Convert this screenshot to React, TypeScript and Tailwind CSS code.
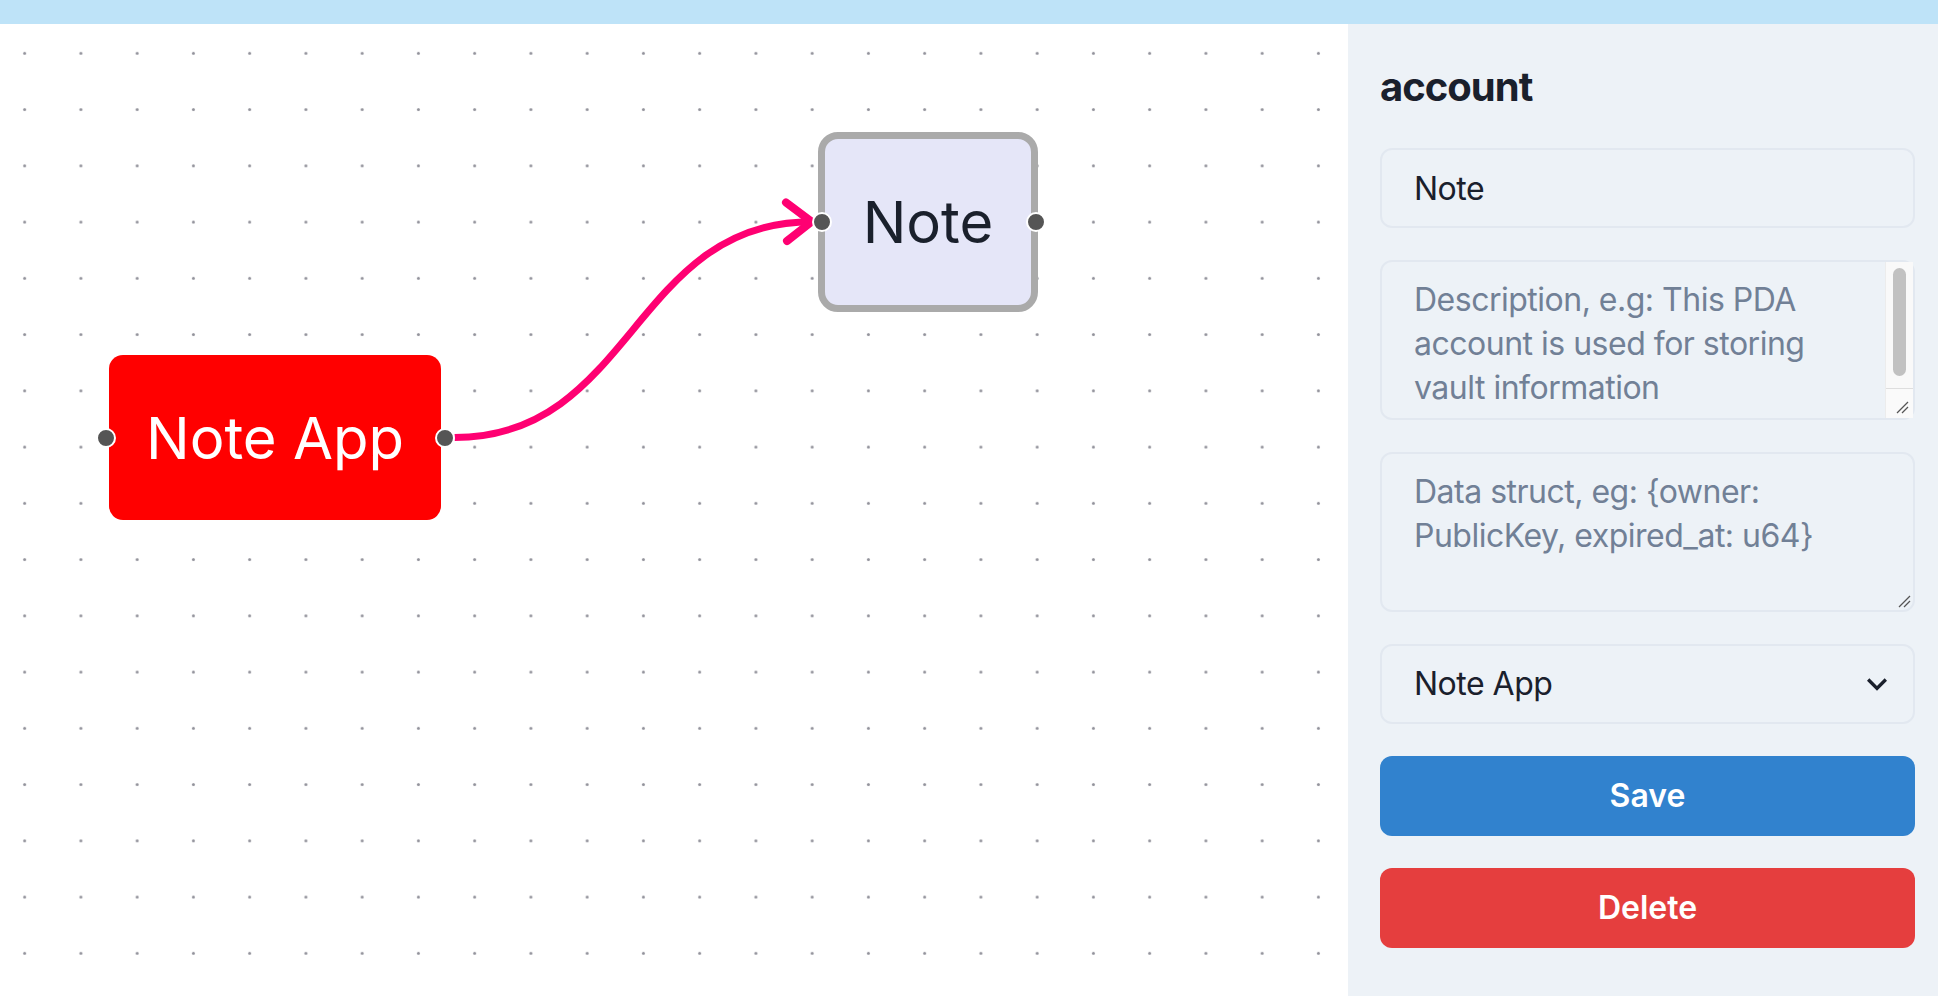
import React from "react";

// canvas handle: dark dot with a white ring
function Handle({ cx, cy }: { cx: number; cy: number }) {
  return (
    <div
      className="absolute h-[20px] w-[20px] rounded-full border-[2.5px] border-white bg-[#555555]"
      style={{ left: cx - 10, top: cy - 10 }}
    />
  );
}

function FlowCanvas() {
  return (
    <div className="relative flex-1 overflow-hidden bg-white">
      {/* dotted background + edge */}
      <svg className="absolute inset-0 h-full w-full" xmlns="http://www.w3.org/2000/svg">
        <defs>
          <pattern
            id="dots"
            x="-3.46"
            y="1.2"
            width="56.25"
            height="56.25"
            patternUnits="userSpaceOnUse"
          >
            <circle cx="28.125" cy="28.125" r="1.5" fill="#91919a" />
          </pattern>
        </defs>
        <rect width="100%" height="100%" fill="url(#dots)" />
        <path
          d="M454.5,413.5 C633,413.5 633,197.7 811.7,197.7"
          fill="none"
          stroke="#ff0072"
          strokeWidth="7"
        />
        <polyline
          points="786,178.5 811.7,197.7 787,217"
          fill="none"
          stroke="#ff0072"
          strokeWidth="8"
          strokeLinecap="round"
          strokeLinejoin="round"
        />
      </svg>

      {/* Note App node */}
      <div className="absolute left-[109px] top-[331px] flex h-[165px] w-[332px] items-center justify-center rounded-[14px] bg-[#ff0000]">
        <span className="text-[58px] leading-none text-white">Note App</span>
      </div>
      <Handle cx={105.5} cy={413.5} />
      <Handle cx={445} cy={413.5} />

      {/* Note node */}
      <div className="absolute left-[818px] top-[108px] flex h-[180px] w-[220px] items-center justify-center rounded-[20px] border-[7px] border-[#aaaaaa] bg-[#e5e6f8]">
        <span className="text-[58px] leading-none text-[#1a202c]">Note</span>
      </div>
      <Handle cx={821.7} cy={198} />
      <Handle cx={1036} cy={198} />
    </div>
  );
}

function ResizeGrip() {
  return (
    <svg
      className="pointer-events-none absolute bottom-[4px] right-[4px]"
      width="14"
      height="14"
      viewBox="0 0 14 14"
    >
      <line x1="2" y1="13" x2="13" y2="2" stroke="#555" strokeWidth="1.2" />
      <line x1="7" y1="13" x2="13" y2="7" stroke="#555" strokeWidth="1.2" />
    </svg>
  );
}

function SidePanel() {
  const field =
    "w-full rounded-[12px] border-2 border-[#e2e8f0] bg-transparent px-8 text-[32px] tracking-[-0.5px] text-[#1a202c] outline-none placeholder:text-[#718096]";

  return (
    <aside className="w-[590px] shrink-0 bg-[#edf2f7] pl-8 pr-[23px] pt-[39px]">
      <h2 className="mb-[37px] text-[40px] font-bold leading-[48px] tracking-[-1px] text-[#1a202c]">account</h2>

      <div className="flex flex-col gap-8">
        <input defaultValue="Note" className={`${field} h-[80px]`} />

        <div className="relative">
          <textarea
            placeholder="Description, e.g: This PDA account is used for storing vault information"
            className={`${field} block h-[160px] resize-none overflow-hidden py-4 pr-[62px] leading-[44px]`}
          />
          {/* scrollbar */}
          <div className="pointer-events-none absolute bottom-[2px] right-[2px] top-[2px] flex w-[28px] flex-col border-l border-[#ececec] bg-[#f9f9f9]">
            <div className="flex-1 px-[7px] pt-[6px] pb-[12px]">
              <div className="h-[108px] w-full rounded-full bg-[#c1c1c1]" />
            </div>
            <div className="relative h-[30px] border-t border-[#dedede] bg-[#fafafa]">
              <ResizeGrip />
            </div>
          </div>
        </div>

        <div className="relative">
          <textarea
            placeholder="Data struct, eg: {owner: PublicKey, expired_at: u64}"
            className={`${field} block h-[160px] resize-none overflow-hidden py-4 leading-[44px]`}
          />
          <ResizeGrip />
        </div>

        <div className="relative">
          <select defaultValue="Note App" className={`${field} h-[80px] appearance-none pr-[80px]`}>
            <option>Note App</option>
          </select>
          <svg
            className="pointer-events-none absolute right-[18px] top-1/2 -translate-y-1/2"
            width="40"
            height="40"
            viewBox="0 0 24 24"
          >
            <path fill="#1a202c" d="M16.59 8.59L12 13.17 7.41 8.59 6 10l6 6 6-6z" />
          </svg>
        </div>

        <button className="h-[80px] w-full rounded-[12px] bg-[#3182ce] text-[32px] font-semibold text-white">
          Save
        </button>
        <button className="h-[80px] w-full rounded-[12px] bg-[#e53e3e] text-[32px] font-semibold text-white">
          Delete
        </button>
      </div>
    </aside>
  );
}

export default function App() {
  return (
    <div className="flex h-screen w-full flex-col overflow-hidden font-[Inter,sans-serif]">
      <div className="h-[24px] shrink-0 bg-[#bee3f8]" />
      <div className="flex min-h-0 flex-1">
        <FlowCanvas />
        <SidePanel />
      </div>
    </div>
  );
}
